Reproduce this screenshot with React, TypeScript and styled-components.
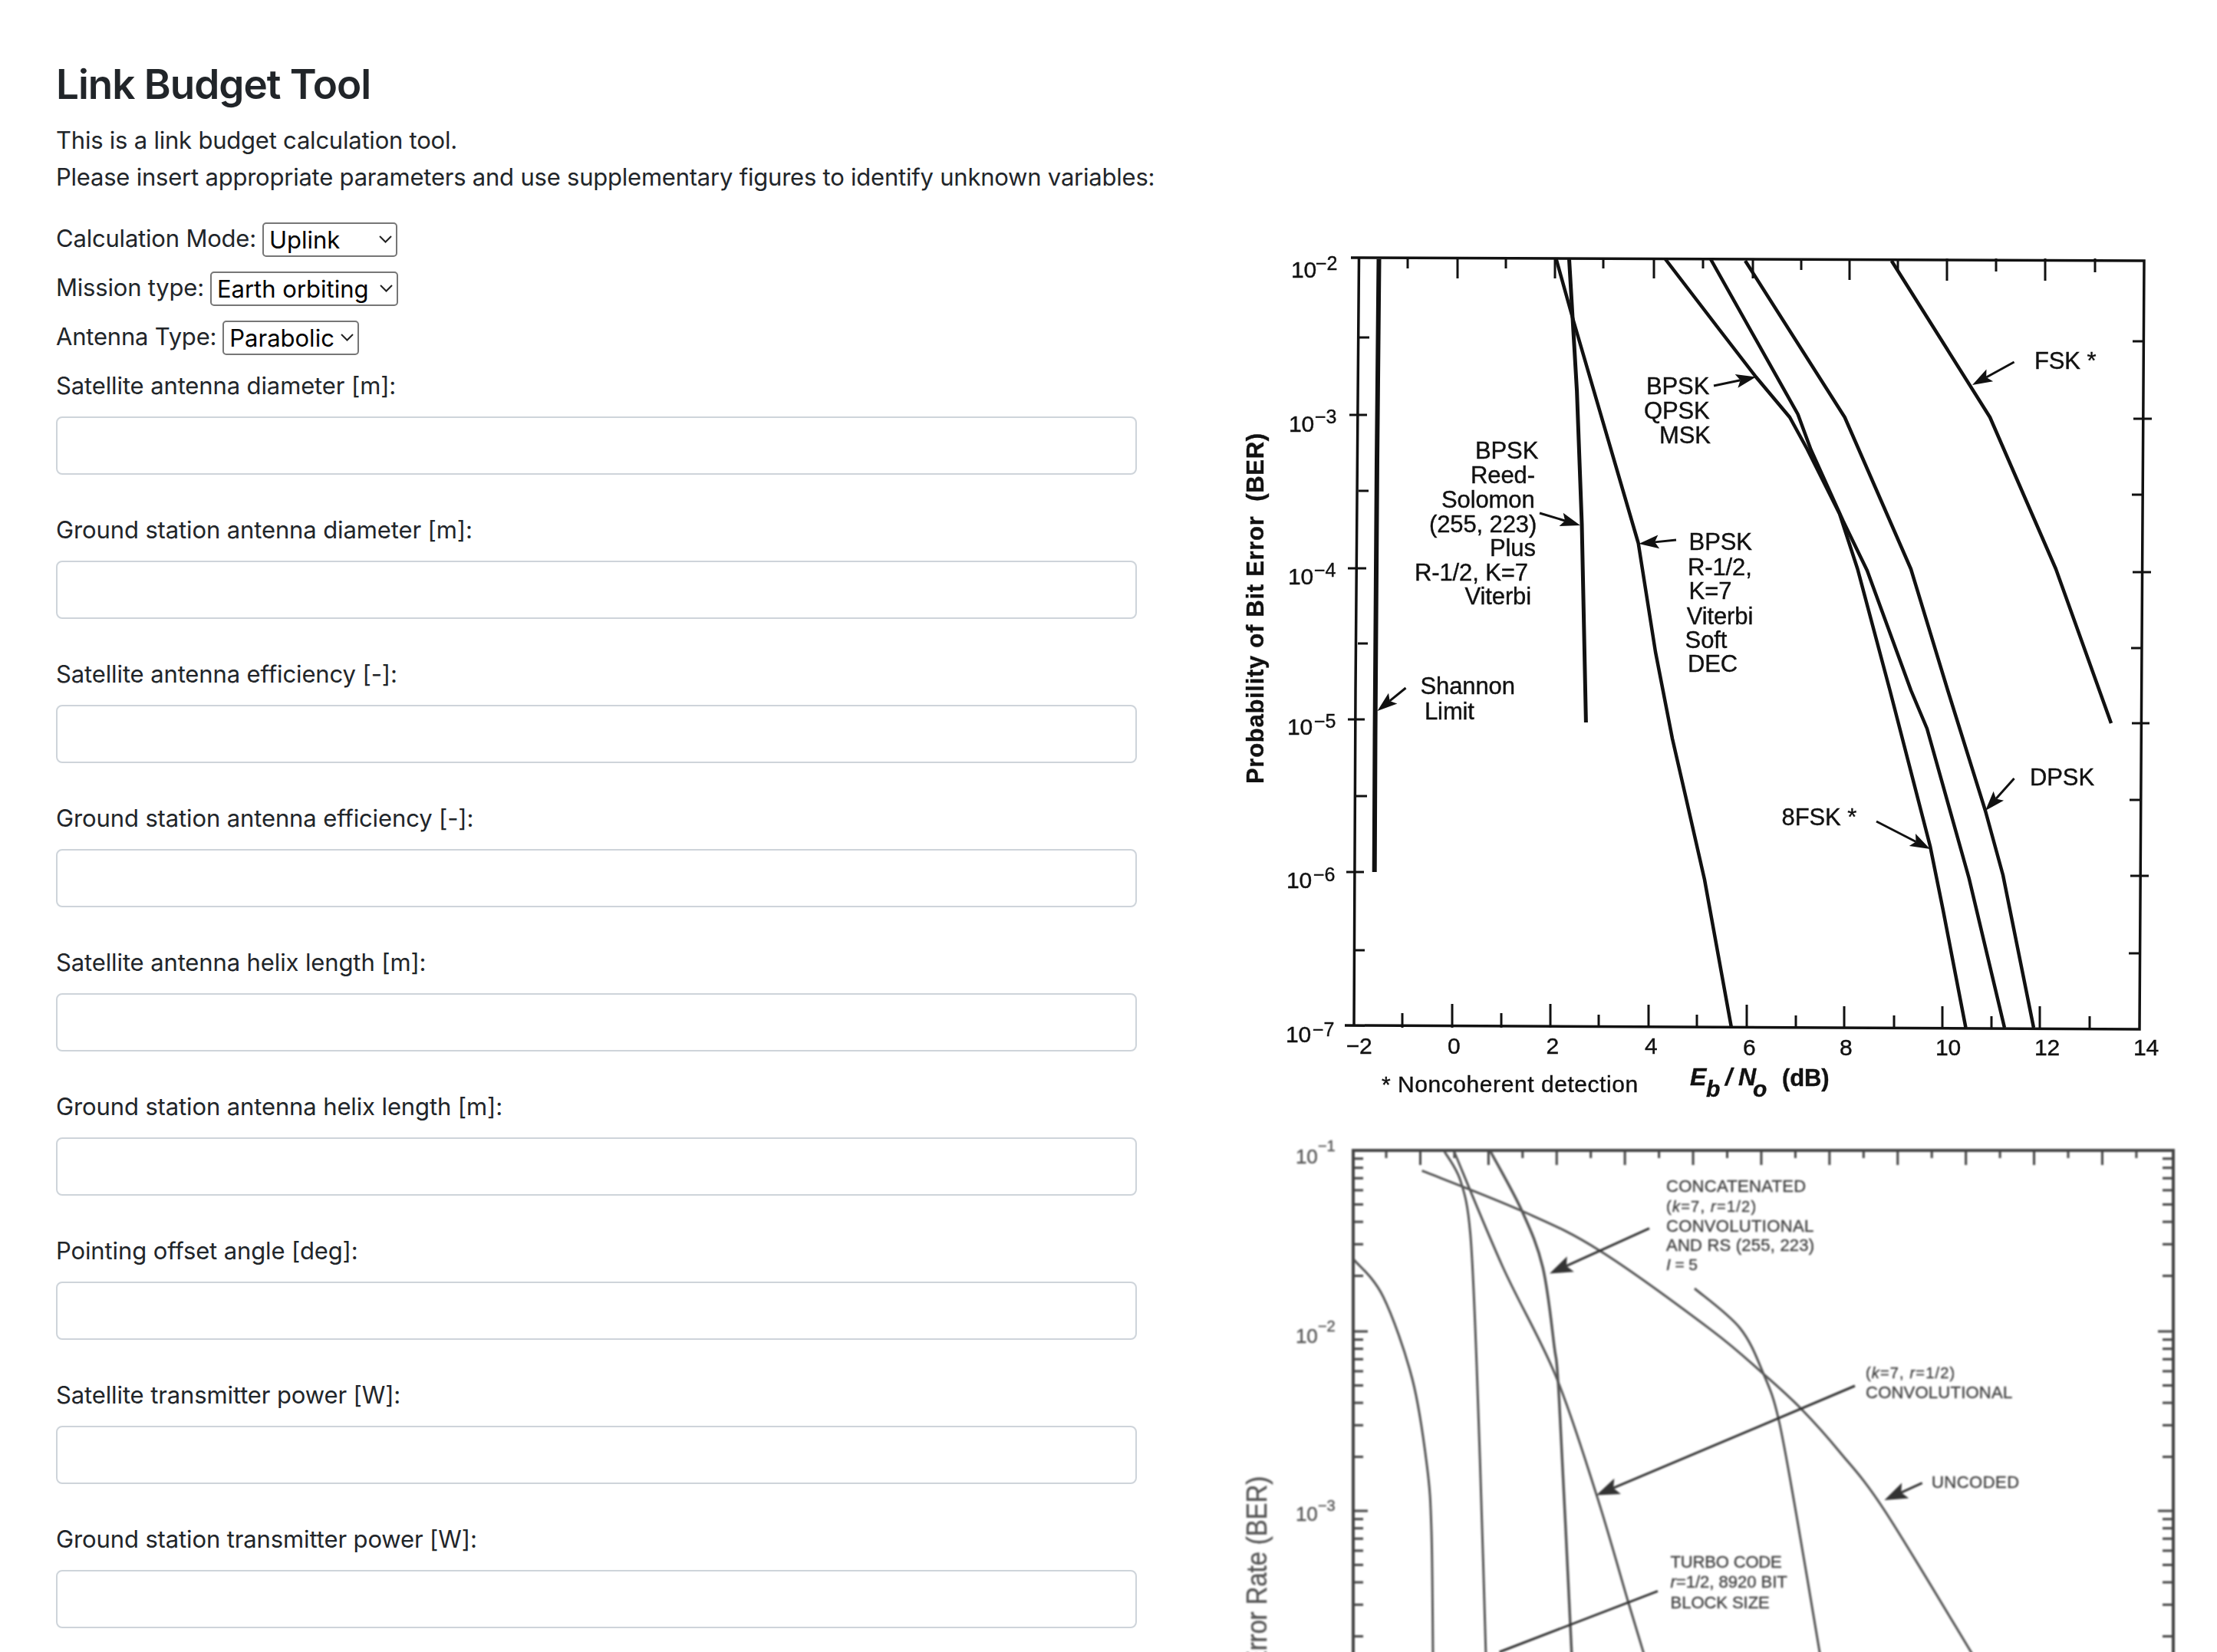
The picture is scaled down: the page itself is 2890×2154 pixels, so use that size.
import styled, { createGlobalStyle } from "styled-components";

type Pt = [number, number];
type Label = [number, number, string];

const GlobalStyle = createGlobalStyle`
  html, body {
    margin: 0;
    height: 2154px;
    overflow: hidden;
    background: #fff;
  }
  * { box-sizing: border-box; }
`;

const fields = [
  "Satellite antenna diameter [m]:",
  "Ground station antenna diameter [m]:",
  "Satellite antenna efficiency [-]:",
  "Ground station antenna efficiency [-]:",
  "Satellite antenna helix length [m]:",
  "Ground station antenna helix length [m]:",
  "Pointing offset angle [deg]:",
  "Satellite transmitter power [W]:",
  "Ground station transmitter power [W]:",
];

const selects = [
  { label: "Calculation Mode:", value: "Uplink", options: ["Uplink", "Downlink"], width: 176 },
  { label: "Mission type:", value: "Earth orbiting", options: ["Earth orbiting", "Deep space"], width: 245 },
  { label: "Antenna Type:", value: "Parabolic", options: ["Parabolic", "Helix"], width: 178 },
];

const toPoints = (pts: Pt[]) => pts.map((p) => p.join(",")).join(" ");

// catmull-rom through the read-off points, the scanned curves have no corners
const smoothPath = (pts: Pt[]) => {
  let d = `M${pts[0][0]} ${pts[0][1]}`;
  for (let i = 0; i < pts.length - 1; i++) {
    const p0 = pts[i - 1] ?? pts[i];
    const p1 = pts[i];
    const p2 = pts[i + 1];
    const p3 = pts[i + 2] ?? p2;
    const c1x = p1[0] + (p2[0] - p0[0]) / 6;
    const c1y = p1[1] + (p2[1] - p0[1]) / 6;
    const c2x = p2[0] - (p3[0] - p1[0]) / 6;
    const c2y = p2[1] - (p3[1] - p1[1]) / 6;
    d += ` C${c1x} ${c1y} ${c2x} ${c2y} ${p2[0]} ${p2[1]}`;
  }
  return d;
};

const Arrow = ({ from, to, len = 26, half = 9, color = "#111", width = 3 }: { from: Pt; to: Pt; len?: number; half?: number; color?: string; width?: number }) => {
  const dx = to[0] - from[0];
  const dy = to[1] - from[1];
  const d = Math.hypot(dx, dy);
  const ux = dx / d;
  const uy = dy / d;
  const bx = to[0] - ux * len;
  const by = to[1] - uy * len;
  const nx = to[0] - ux * len * 0.8;
  const ny = to[1] - uy * len * 0.8;
  return (
    <>
      <line x1={from[0]} y1={from[1]} x2={nx} y2={ny} stroke={color} strokeWidth={width} />
      <polygon
        points={toPoints([to, [bx - uy * half, by + ux * half], [nx, ny], [bx + uy * half, by - ux * half]])}
        fill={color}
      />
    </>
  );
};

/* ---- first figure: modulation curves ---- */

const topTicks: Pt[] = [
  [1835, 350], [1900, 363], [1963, 350], [2027, 363], [2090, 350], [2156, 363], [2220, 350], [2285, 363],
  [2348, 352], [2411, 365], [2474, 352], [2538, 366], [2602, 354], [2666, 366], [2731, 355],
];
const bottomTicks: Pt[] = [
  [1828, 1321], [1893, 1309], [1957, 1321], [2021, 1309], [2084, 1323], [2149, 1310], [2212, 1323], [2277, 1310],
  [2341, 1324], [2404, 1312], [2469, 1324], [2532, 1312], [2596, 1325], [2659, 1312], [2724, 1325],
];
const leftTicks: [number, number, number][] = [
  [1771, 1785, 440], [1759, 1782, 541], [1771, 1784, 640], [1757, 1781, 741], [1770, 1783, 839],
  [1757, 1779, 938], [1768, 1782, 1038], [1755, 1778, 1137], [1766, 1779, 1239],
];
const rightTicks: [number, number, number][] = [
  [2780, 2794, 445], [2781, 2805, 546], [2779, 2792, 645], [2780, 2804, 746], [2778, 2792, 845],
  [2779, 2802, 943], [2776, 2790, 1043], [2777, 2801, 1142], [2775, 2789, 1243],
];

const curves: { pts: Pt[]; width: number }[] = [
  { pts: [[1797.5, 338], [1795, 600], [1792.5, 960], [1791.7, 1137]], width: 6 },
  { pts: [[2045.5, 338], [2055.6, 510], [2062, 683], [2067.4, 942]], width: 5 },
  { pts: [[2028.7, 338], [2051, 418], [2135.6, 708], [2158, 850], [2180, 963], [2197, 1037], [2222, 1147], [2257, 1340]], width: 4.5 },
  { pts: [[2171, 338], [2240, 428], [2289, 491.5], [2333, 544], [2356, 586], [2398, 670], [2421.5, 742], [2463.6, 900], [2516, 1103], [2533, 1187], [2562.5, 1340]], width: 4.5 },
  { pts: [[2230, 338], [2343.6, 540], [2360.5, 586], [2402.5, 679], [2434, 744], [2491, 900], [2512, 950], [2566.7, 1145], [2613, 1340]], width: 4.5 },
  { pts: [[2275, 340], [2404.7, 544], [2491, 742], [2539, 900], [2588, 1057], [2611, 1141], [2651, 1340]], width: 4.5 },
  { pts: [[2465.7, 340], [2594, 544], [2680, 742], [2752, 943]], width: 4.5 },
];

const arrows: [Pt, Pt][] = [
  [[2234, 503], [2289, 491.5]],
  [[2625.6, 472], [2571, 502]],
  [[1832.5, 897], [1795.5, 927]],
  [[2007, 669], [2060, 685]],
  [[2185, 704], [2136.4, 709]],
  [[2625.6, 1015], [2588, 1057]],
  [[2446, 1071], [2516, 1107]],
];

const curveLabels: Label[] = [
  [1923, 598, "BPSK"], [1917, 629.5, "Reed-"], [1879, 662, "Solomon"], [1863, 693.5, "(255, 223)"],
  [1942, 725, "Plus"], [1844, 756.6, "R-1/2, K=7"], [1909.5, 788, "Viterbi"],
  [2146, 514, "BPSK"], [2143, 546, "QPSK"], [2163, 578, "MSK"],
  [2201.6, 717, "BPSK"], [2200, 749.5, "R-1/2,"], [2201.6, 781, "K=7"], [2198.7, 813.5, "Viterbi"],
  [2196.6, 845, "Soft"], [2200, 876, "DEC"],
  [1851.5, 905, "Shannon"], [1857, 937.6, "Limit"],
  [2652, 481, "FSK *"], [2646, 1024, "DPSK"], [2322.6, 1076, "8FSK *"],
];

const yDecades: { x: number; base: number; supX: number; supBase: number; exp: string }[] = [
  { x: 1683, base: 362, supX: 1715, supBase: 352, exp: "−2" },
  { x: 1680, base: 563, supX: 1714, supBase: 552, exp: "−3" },
  { x: 1679, base: 762, supX: 1713, supBase: 752, exp: "−4" },
  { x: 1678, base: 958, supX: 1713, supBase: 949, exp: "−5" },
  { x: 1677, base: 1158, supX: 1712, supBase: 1149, exp: "−6" },
  { x: 1676, base: 1359, supX: 1711, supBase: 1351, exp: "−7" },
];

const xLabels: Label[] = [
  [1754.7, 1374, "−2"], [1887, 1374, "0"], [2015.6, 1374, "2"], [2144, 1374, "4"],
  [2272, 1376, "6"], [2398, 1376, "8"], [2523, 1376, "10"], [2652, 1376, "12"], [2781, 1376, "14"],
];

const ModulationChart = () => (
  <Figure $blur={0.7} width="1310" height="1173" viewBox="1580 287 1310 1173">
    <polyline points={toPoints([[1761, 336], [2795, 340], [2789, 1342], [1753, 1337]])} fill="none" stroke="#111" strokeWidth={3.5} />
    <polyline points={toPoints([[1771.5, 336], [1767, 900], [1765, 1337]])} fill="none" stroke="#111" strokeWidth={3.5} />
    {topTicks.map(([x, y]) => <line key={x} x1={x} y1={337} x2={x} y2={y} stroke="#111" strokeWidth={3} />)}
    {bottomTicks.map(([x, y]) => <line key={x} x1={x} y1={1340} x2={x} y2={y} stroke="#111" strokeWidth={3} />)}
    {[...leftTicks, ...rightTicks].map(([a, b, y]) => <line key={`${a}-${y}`} x1={a} y1={y} x2={b} y2={y} stroke="#111" strokeWidth={3} />)}
    {curves.map((c, i) => <polyline key={i} points={toPoints(c.pts)} fill="none" stroke="#111" strokeWidth={c.width} strokeLinejoin="round" />)}
    {arrows.map(([from, to], i) => <Arrow key={i} from={from} to={to} />)}
    {curveLabels.map(([x, y, t]) => <ChartText key={`${x}${y}`} x={x} y={y} $size={31}>{t}</ChartText>)}
    {yDecades.map((d) => (
      <g key={d.exp}>
        <ChartText x={d.x} y={d.base} $size={30}>10</ChartText>
        <ChartText x={d.supX} y={d.supBase} $size={25}>{d.exp}</ChartText>
      </g>
    ))}
    {xLabels.map(([x, y, t]) => <ChartText key={t} x={x} y={y} $size={30}>{t}</ChartText>)}
    <ChartText x={1801} y={1424} $size={30} textLength={334}>* Noncoherent detection</ChartText>
    <ChartText x={2203} y={1415} $size={32} $weight={700} $italic>E</ChartText>
    <ChartText x={2224} y={1430} $size={30} $weight={700} $italic>b</ChartText>
    <ChartText x={2249} y={1415} $size={32} $weight={700} $italic>/</ChartText>
    <ChartText x={2266} y={1415} $size={32} $weight={700} $italic>N</ChartText>
    <ChartText x={2285} y={1430} $size={30} $weight={700} $italic>o</ChartText>
    <ChartText x={2323} y={1416} $size={31} $weight={700}>(dB)</ChartText>
    <ChartText transform="translate(1647,1022) rotate(-90)" $size={31} $weight={700} textLength={457}>
      {"Probability of Bit Error\u00a0\u00a0(BER)"}
    </ChartText>
  </Figure>
);

/* ---- second figure: coding curves, runs off the bottom of the page ---- */

const FRAME_TOP = 1500;
const DECADE = 234;
const decadeMarks = (y0: number) =>
  [9, 8, 7, 6, 5, 4, 3, 2].map((m) => y0 + DECADE * (1 - Math.log10(m)));
const minorYs = [FRAME_TOP, FRAME_TOP + DECADE + 2, FRAME_TOP + 2 * DECADE + 2].flatMap(decadeMarks);
const majorYs = [1736, 1970];
const frameTicks = Array.from({ length: 23 }, (_, i) => ({ x: 1807 + i * 44.45, long: i % 2 === 1 }));

const codingCurves: { pts: Pt[]; width: number }[] = [
  { pts: [[1765, 1642.5], [1803, 1690.7], [1841, 1798], [1860, 1910], [1866, 1996], [1868, 2160]], width: 3 },
  { pts: [[1883, 1501.5], [1904, 1540], [1916.7, 1609], [1925, 1781], [1933.5, 2039], [1937, 2160]], width: 3 },
  { pts: [[1895.6, 1501.5], [1959, 1652], [2028, 1794], [2081, 1948.6], [2123, 2090.5], [2144, 2160]], width: 3 },
  { pts: [[1943, 1501.5], [1984, 1579], [2011, 1652], [2026, 1755], [2032.4, 1824], [2049, 2160]], width: 3.5 },
  { pts: [[1853.6, 1526.4], [1984, 1579], [2085, 1630.5], [2230, 1733.6], [2299, 1791.7], [2348, 1837], [2398, 1893], [2457, 1970], [2573, 2160]], width: 3 },
  { pts: [[2209, 1680], [2268, 1731.5], [2299, 1791.7], [2318.4, 1850], [2341.5, 1974], [2373, 2160]], width: 3 },
];

const codingArrows: [Pt, Pt][] = [
  [[2150, 1601.7], [2020, 1660.6]],
  [[2418, 1807], [2081, 1949.5]],
  [[2505.7, 1933.6], [2456.4, 1956]],
];

const codingLabels: { x: number; y: number; text: string; width: number }[] = [
  { x: 2172, y: 1554, text: "CONCATENATED", width: 182 },
  { x: 2172, y: 1605.5, text: "CONVOLUTIONAL", width: 192 },
  { x: 2172, y: 1630.5, text: "AND RS (255, 223)", width: 193 },
  { x: 2177.6, y: 2044, text: "TURBO CODE", width: 145 },
  { x: 2177.6, y: 2097, text: "BLOCK SIZE", width: 129 },
  { x: 2432, y: 1822.6, text: "CONVOLUTIONAL", width: 191 },
  { x: 2518, y: 1940, text: "UNCODED", width: 114 },
];

const CodingChart = () => (
  <Figure $blur={1.1} width="1310" height="800" viewBox="1580 1460 1310 800">
    <polyline points={toPoints([[1764, 2260], [1764, FRAME_TOP], [2833, FRAME_TOP], [2833, 2260]])} fill="none" stroke="#444" strokeWidth={4} />
    {frameTicks.map((t) => <line key={t.x} x1={t.x} y1={FRAME_TOP} x2={t.x} y2={t.long ? 1519 : 1510} stroke="#444" strokeWidth={3} />)}
    {minorYs.map((y) => (
      <g key={y}>
        <line x1={1764} y1={y} x2={1777} y2={y} stroke="#444" strokeWidth={3} />
        <line x1={2819} y1={y} x2={2833} y2={y} stroke="#444" strokeWidth={3} />
      </g>
    ))}
    {majorYs.map((y) => (
      <g key={y}>
        <line x1={1764} y1={y} x2={1783} y2={y} stroke="#444" strokeWidth={3} />
        <line x1={2813} y1={y} x2={2833} y2={y} stroke="#444" strokeWidth={3} />
      </g>
    ))}
    {codingCurves.map((c, i) => <path key={i} d={smoothPath(c.pts)} fill="none" stroke="#555" strokeWidth={c.width} />)}
    {codingArrows.map(([from, to], i) => <Arrow key={i} from={from} to={to} color="#333" len={30} half={11} />)}
    <line x1={2161} y1={2074.6} x2={1954.6} y2={2154} stroke="#333" strokeWidth={3} />
    {codingLabels.map((l) => (
      <ChartText key={`${l.x}${l.y}`} x={l.x} y={l.y} $size={22} $color="#444" textLength={l.width}>{l.text}</ChartText>
    ))}
    <ChartText x={2172} y={1580} $size={20} $color="#444" textLength={117}>
      (<tspan fontStyle="italic">k</tspan>=7, <tspan fontStyle="italic">r</tspan>=1/2)
    </ChartText>
    <ChartText x={2172} y={1656} $size={21} $color="#444">
      <tspan fontStyle="italic">I</tspan> = 5
    </ChartText>
    <ChartText x={2177.6} y={2070} $size={22} $color="#444" textLength={152}>
      <tspan fontStyle="italic">r</tspan>=1/2, 8920 BIT
    </ChartText>
    <ChartText x={2432} y={1797} $size={20} $color="#444" textLength={116}>
      (<tspan fontStyle="italic">k</tspan>=7, <tspan fontStyle="italic">r</tspan>=1/2)
    </ChartText>
    <ChartText x={1689} y={1516.5} $size={26} $color="#555">10</ChartText>
    <ChartText x={1718} y={1501} $size={20} $color="#555">−1</ChartText>
    <ChartText x={1689} y={1751} $size={26} $color="#555">10</ChartText>
    <ChartText x={1718} y={1736} $size={20} $color="#555">−2</ChartText>
    <ChartText x={1689} y={1983} $size={26} $color="#555">10</ChartText>
    <ChartText x={1718} y={1970} $size={20} $color="#555">−3</ChartText>
    <ChartText transform="translate(1651,1925) rotate(-90) scale(1,1.13)" $size={33} $color="#555" textAnchor="end">
      Bit Error Rate (BER)
    </ChartText>
  </Figure>
);

const App = () => (
  <>
    <GlobalStyle />
    <Page>
      <Title>Link Budget Tool</Title>
      <Intro>
        This is a link budget calculation tool.
        <br />
        Please insert appropriate parameters and use supplementary figures to identify unknown variables:
      </Intro>
      <Columns>
        <Form>
          {selects.map((s) => (
            <SelectRow key={s.label}>
              <span>{s.label}</span>
              <SelectBox $width={s.width}>
                <NativeSelect defaultValue={s.value}>
                  {s.options.map((o) => <option key={o}>{o}</option>)}
                </NativeSelect>
                <Chevron width="19" height="12" viewBox="0 0 19 12">
                  <path d="M2 2 L9.5 9.5 L17 2" fill="none" stroke="#222" strokeWidth="2" />
                </Chevron>
              </SelectBox>
            </SelectRow>
          ))}
          {fields.map((f) => (
            <Field key={f}>
              <FieldLabel>{f}</FieldLabel>
              <TextInput type="text" />
            </Field>
          ))}
        </Form>
        <Figures>
          <ModulationChart />
          <CodingChart />
        </Figures>
      </Columns>
    </Page>
  </>
);

export default App;

const Page = styled.div`
  height: 2154px;
  overflow: hidden;
  padding: 77px 0 0 73px;
  font-family: Inter, "Liberation Sans", sans-serif;
  font-size: 31px;
  line-height: 48px;
  letter-spacing: -0.12px;
  color: #212529;
`;

const Title = styled.h1`
  margin: 0 0 15px;
  font-size: 53px;
  line-height: 67px;
  font-weight: 600;
  letter-spacing: -1px;
`;

const Intro = styled.p`
  margin: 0 0 32px;
  white-space: nowrap;
  letter-spacing: -0.22px;
`;

const Columns = styled.div`
  display: grid;
  grid-template-columns: 1409px 1310px;
  column-gap: 98px;
  align-items: start;
`;

const Form = styled.form`
  display: flex;
  flex-direction: column;
`;

const SelectRow = styled.div`
  display: flex;
  align-items: center;
  gap: 8px;
  height: 48px;
  margin-bottom: 16px;
  letter-spacing: -0.2px;
`;

const SelectBox = styled.div<{ $width: number }>`
  position: relative;
  width: ${(p) => p.$width}px;
  height: 45px;
`;

const NativeSelect = styled.select`
  appearance: none;
  width: 100%;
  height: 100%;
  padding: 0 0 0 7px;
  border: 2px solid #767676;
  border-radius: 5px;
  background: #fff;
  color: #000;
  font: inherit;
  line-height: 41px;
`;

const Chevron = styled.svg`
  position: absolute;
  right: 6px;
  top: 17px;
  pointer-events: none;
`;

const Field = styled.div`
  display: flex;
  flex-direction: column;
  margin-bottom: 48px;
`;

const FieldLabel = styled.label`
  margin-bottom: 16px;
`;

const TextInput = styled.input`
  width: 100%;
  height: 76px;
  border: 2px solid #ced4da;
  border-radius: 8px;
  background: #fff;
`;

const Figures = styled.div`
  display: flex;
  flex-direction: column;
`;

const Figure = styled.svg<{ $blur: number }>`
  display: block;
  filter: blur(${(p) => p.$blur}px);
`;

const ChartText = styled.text<{ $size: number; $weight?: number; $italic?: boolean; $color?: string }>`
  font-family: "Liberation Sans", Arial, sans-serif;
  font-size: ${(p) => p.$size}px;
  font-weight: ${(p) => p.$weight ?? 400};
  font-style: ${(p) => (p.$italic ? "italic" : "normal")};
  fill: ${(p) => p.$color ?? "#111"};
  stroke: ${(p) => p.$color ?? "#111"};
  stroke-width: 0.4px;
`;
